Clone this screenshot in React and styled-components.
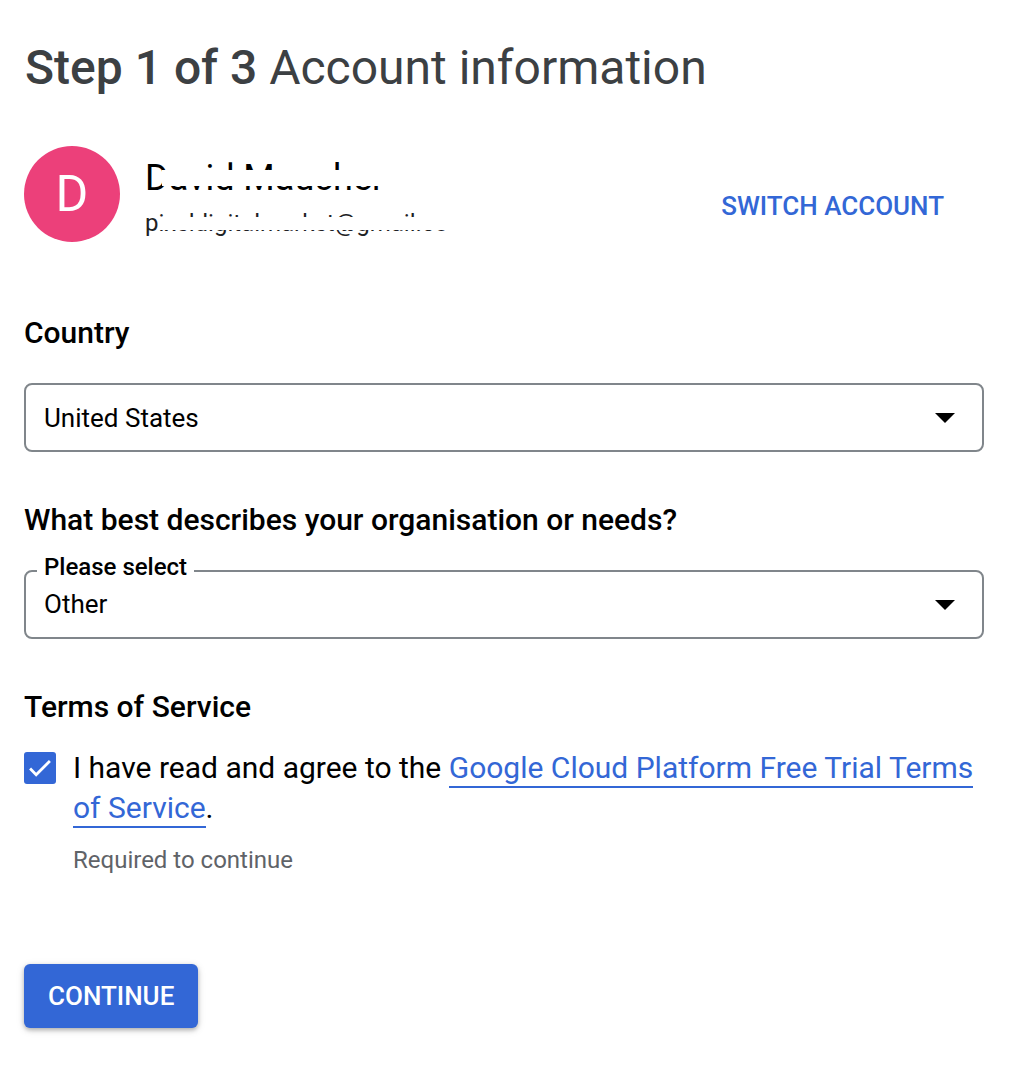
import React from "react";
import styled, { createGlobalStyle } from "styled-components";

const GlobalStyle = createGlobalStyle`
  html, body {
    margin: 0;
    padding: 0;
    background: #fff;
  }
  body {
    font-family: Roboto, "Liberation Sans", Arial, sans-serif;
    color: #202124;
  }
`;

const BLUE = "#3367d6";

const Page = styled.div`
  width: 1013px;
  height: 1079px;
  box-sizing: border-box;
  padding: 40px 29px 0 24px;
  display: flex;
  flex-direction: column;
`;

const Title = styled.h1`
  margin: 0 0 0 1px;
  font-size: 48px;
  line-height: 56px;
  font-weight: 400;
  color: #3c4043;
  b {
    font-weight: 500;
  }
`;

const AccountRow = styled.div`
  display: flex;
  align-items: flex-start;
  margin-top: 50px;
`;

const Avatar = styled.div`
  width: 96px;
  height: 96px;
  border-radius: 50%;
  background: #ec407a;
  color: #fff;
  display: flex;
  align-items: center;
  justify-content: center;
  font-size: 50px;
  flex-shrink: 0;
`;

const AccountInfo = styled.div`
  display: flex;
  flex-direction: column;
  margin: 10px 0 0 25px;
  flex: 1;
`;

/* the name and mail are partly hidden in the picture: a white band lies over them */
const Name = styled.div`
  position: relative;
  font-size: 36px;
  line-height: 44px;
  color: #000;
  &::after {
    content: "";
    position: absolute;
    left: 17px;
    top: 14px;
    right: 0;
    height: 16px;
    background: #fff;
  }
`;

const Email = styled.div`
  position: relative;
  font-size: 24px;
  line-height: 30px;
  margin-top: 8px;
  color: #202124;
  white-space: nowrap;
  width: 300px;
  overflow: hidden;
  &::after {
    content: "";
    position: absolute;
    left: 14px;
    top: 9px;
    right: 0;
    height: 13px;
    background: #fff;
  }
`;

const SwitchButton = styled.button`
  border: none;
  background: none;
  padding: 0;
  margin: 45px 40px 0 0;
  line-height: 30px;
  color: ${BLUE};
  font-family: inherit;
  font-size: 26px;
  font-weight: 500;
`;

const Section = styled.div`
  display: flex;
  flex-direction: column;
  margin-top: ${({ $top }) => $top}px;
`;

const Label = styled.div`
  font-size: 30px;
  line-height: 36px;
  font-weight: 500;
  color: #000;
`;

const SelectBox = styled.div`
  position: relative;
  margin-top: 32px;
  height: 69px;
  box-sizing: border-box;
  border: 2px solid #80868b;
  border-radius: 8px;
  display: flex;
  align-items: center;
  padding: 0 27px 0 18px;
  font-size: 26px;
  color: #000;
`;

const SelectValue = styled.span`
  flex: 1;
  margin-top: ${({ $shift }) => $shift || 0}px;
`;

const Legend = styled.span`
  position: absolute;
  left: 11px;
  top: -19px;
  padding: 0 7px;
  background: #fff;
  font-size: 24px;
  line-height: 28px;
  font-weight: 500;
  color: #000;
`;

const Arrow = styled.span`
  width: 0;
  height: 0;
  border-left: 10px solid transparent;
  border-right: 10px solid transparent;
  border-top: 10px solid #000;
`;

const CheckRow = styled.div`
  display: flex;
  align-items: flex-start;
  margin-top: 23px;
`;

const CheckBox = styled.div`
  width: 32px;
  height: 32px;
  border-radius: 3px;
  background: ${BLUE};
  display: flex;
  align-items: center;
  justify-content: center;
  flex-shrink: 0;
  margin-top: 4px;
`;

const CheckText = styled.div`
  margin-left: 17px;
  font-size: 30px;
  line-height: 40px;
  color: #000;
`;

const TermsLink = styled.a`
  color: ${BLUE};
  text-decoration: none;
  border-bottom: 2px solid ${BLUE};
  padding-bottom: 1px;
`;

const Hint = styled.div`
  margin: 17px 0 0 49px;
  font-size: 24px;
  line-height: 30px;
  color: #5f6368;
`;

const ContinueButton = styled.button`
  align-self: flex-start;
  margin-top: 89px;
  height: 64px;
  padding: 0 24px;
  border: none;
  border-radius: 6px;
  background: ${BLUE};
  color: #fff;
  font-family: inherit;
  font-size: 26px;
  font-weight: 500;
  box-shadow: 0 2px 4px rgba(0, 0, 0, 0.25), 0 2px 8px rgba(0, 0, 0, 0.12);
`;

export default function App() {
  return (
    <>
      <GlobalStyle />
      <Page>
        <Title>
          <b>Step 1 of 3</b> Account information
        </Title>

        <AccountRow>
          <Avatar>D</Avatar>
          <AccountInfo>
            <Name>David Maucher</Name>
            <Email>pixeldigitalmarket@gmail.com</Email>
          </AccountInfo>
          <SwitchButton>SWITCH ACCOUNT</SwitchButton>
        </AccountRow>

        <Section $top={73}>
          <Label>Country</Label>
          <SelectBox>
            <SelectValue>United States</SelectValue>
            <Arrow />
          </SelectBox>
        </Section>

        <Section $top={50}>
          <Label>What best describes your organisation or needs?</Label>
          <SelectBox>
            <Legend>Please select</Legend>
            <SelectValue $shift={-1}>Other</SelectValue>
            <Arrow />
          </SelectBox>
        </Section>

        <Section $top={50}>
          <Label>Terms of Service</Label>
          <CheckRow>
            <CheckBox>
              <svg width="28" height="28" viewBox="0 0 24 24">
                <path
                  d="M3.5 12.5l5.2 5.2L20.5 6"
                  fill="none"
                  stroke="#fff"
                  strokeWidth="2.4"
                />
              </svg>
            </CheckBox>
            <CheckText>
              I have read and agree to the{" "}
              <TermsLink href="#">
                Google Cloud Platform Free Trial Terms of Service
              </TermsLink>
              .
            </CheckText>
          </CheckRow>
          <Hint>Required to continue</Hint>
        </Section>

        <ContinueButton>CONTINUE</ContinueButton>
      </Page>
    </>
  );
}
